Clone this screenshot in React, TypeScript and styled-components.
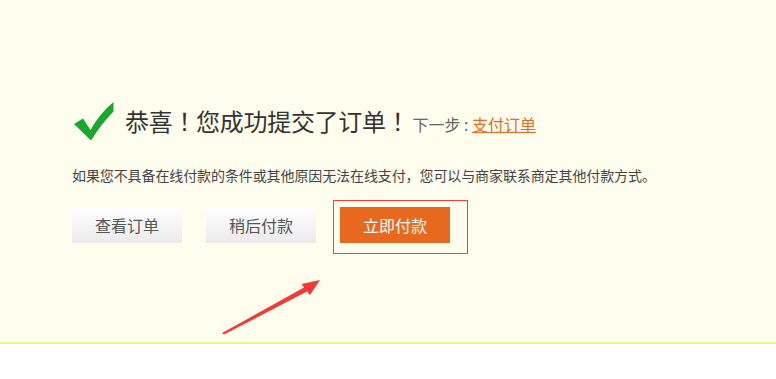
import styled, { createGlobalStyle } from "styled-components";

const GlobalStyle = createGlobalStyle`
  html, body {
    margin: 0;
    padding: 0;
    background: #ffffff;
  }
  body {
    font-family: "Noto Sans CJK SC", "Liberation Sans", sans-serif;
    color: #333;
  }
`;

const CheckIcon = () => (
  <svg width="41" height="40" viewBox="0 0 41 40">
    <path
      d="M0 22 L9 16.5 L16.5 28 Q26 11 39.5 0 L39.5 9.5 Q28 21 17 38.5 Z"
      fill="#17a82d"
    />
  </svg>
);

const App = () => {
  return (
    <>
      <GlobalStyle />
      <StyledPanel>
        <div className="title-row">
          <CheckIcon />
          <h2>
            <span className="headline">恭喜！您成功提交了订单！</span>
            <span className="next">
              下一步 : <a href="#pay">支付订单</a>
            </span>
          </h2>
        </div>
        <p className="desc">
          如果您不具备在线付款的条件或其他原因无法在线支付，您可以与商家联系商定其他付款方式。
        </p>
        <div className="actions">
          <Button>查看订单</Button>
          <Button>稍后付款</Button>
          <Highlight>
            <Button $primary>立即付款</Button>
          </Highlight>
        </div>
        <svg className="arrow" width="776" height="379" viewBox="0 0 776 379">
          <polygon
            points="222,333 304,287.5 301.5,284 320,280 310,295 307,291.5 224,334.5"
            fill="#f23a35"
          />
        </svg>
      </StyledPanel>
    </>
  );
};

const StyledPanel = styled.div`
  position: relative;
  box-sizing: border-box;
  height: 344px;
  padding: 102px 0 0 72px;
  background: #fffded;
  border-bottom: 2px solid #f7f08c;

  .title-row {
    display: flex;
    align-items: center;
    height: 40px;
    padding-left: 2px;

    h2 {
      margin: 0 0 0 10px;
      font-size: 24px;
      font-weight: normal;
      color: #333;
      line-height: 30px;
    }

    .headline {
      font-family: "Noto Sans CJK TC", "Noto Sans CJK SC", sans-serif;
      letter-spacing: -0.3px;
    }

    .next {
      margin-left: 3px;
      font-size: 16px;
      color: #666;
    }

    a {
      color: #ec6a1e;
      text-decoration: underline;
    }
  }

  .desc {
    margin: 23px 0 0;
    font-size: 14px;
    line-height: 20px;
    color: #444;
    letter-spacing: -0.1px;
  }

  .actions {
    display: flex;
    align-items: flex-start;
    gap: 24px;
    margin-top: 22px;
  }

  .arrow {
    position: absolute;
    left: 0;
    top: 0;
    pointer-events: none;
  }
`;

const Button = styled.button<{ $primary?: boolean }>`
  width: 110px;
  height: 36px;
  border: none;
  padding: 0;
  font-family: inherit;
  font-size: 16px;
  cursor: pointer;
  color: ${(p) => (p.$primary ? "#fff" : "#555")};
  background: ${(p) =>
    p.$primary ? "#e8691e" : "linear-gradient(#ffffff, #ebebeb)"};
`;

const Highlight = styled.div`
  display: flex;
  margin: -7px 0 0 -7px;
  padding: 6px 17px 10px 6px;
  border: 1px solid #f2403a;
`;

export default App;
